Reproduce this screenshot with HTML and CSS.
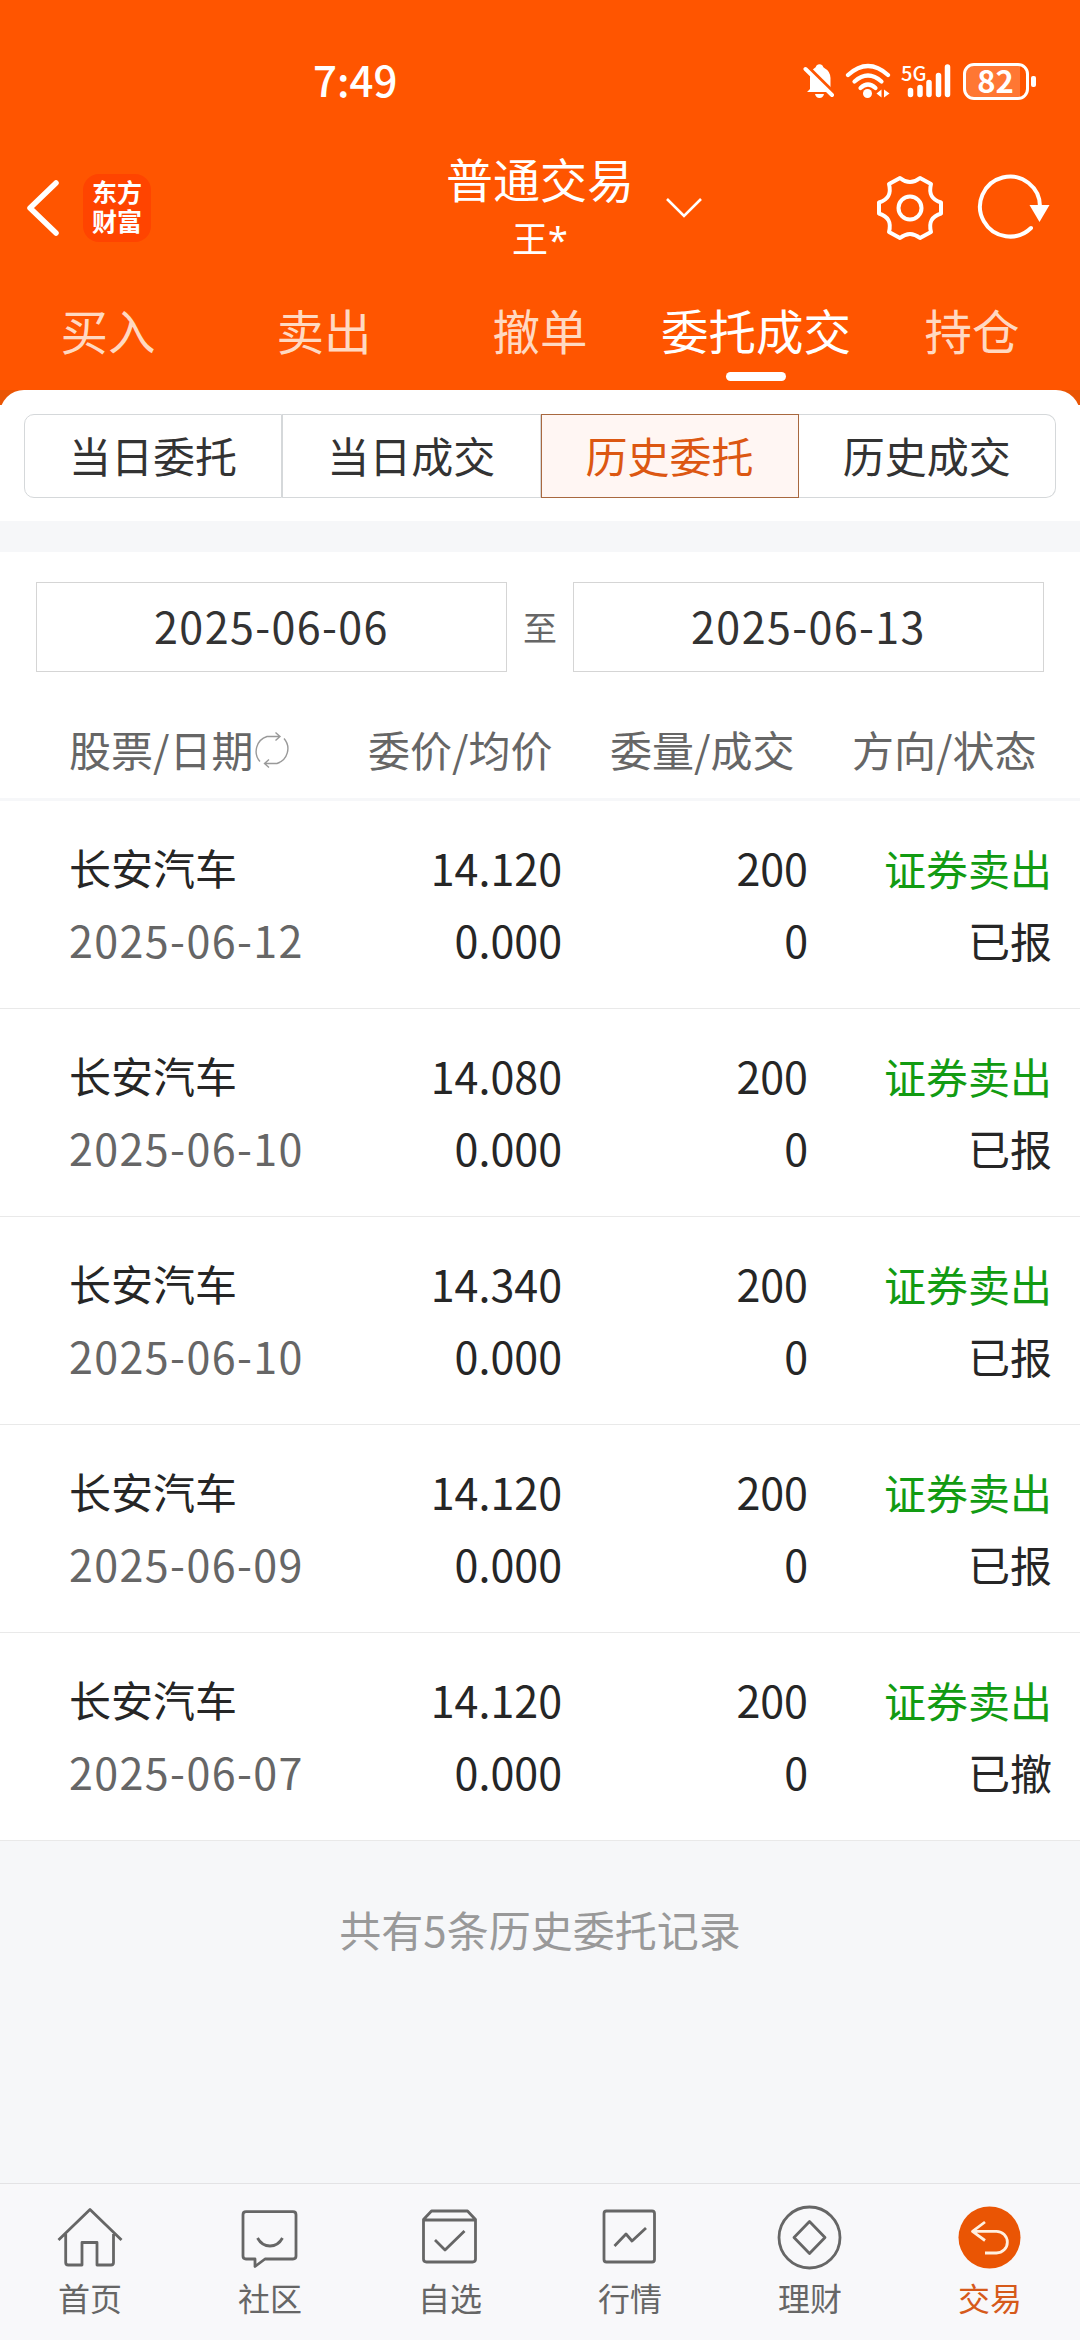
FILE: index.html
```
<!DOCTYPE html>
<html lang="zh-CN">
<head>
    <meta charset="UTF-8">
    <meta name="viewport" content="width=device-width, initial-scale=1.0">
    <title>普通交易</title>
    <link rel="stylesheet" href="styles.css">
</head>
<body>
    <div class="header">
        <!-- status bar -->
        <div class="status">
            <div class="time">7:49</div>
            <div class="status-icons">
                <svg class="bell" width="32" height="36" viewBox="0 0 32 36">
                    <path d="M7 15 Q7 8 11 5.500 Q13 4.500 13.500 2.500 Q16.500 0 19.500 2.500 Q20 4.500 22 5.500 Q27 8 27.500 15 V26 L29 29 H4 L7 26 Z" fill="#fff"/>
                    <path d="M12 31 H21 Q20 35 16.500 35 Q13 35 12 31 Z" fill="#fff"/>
                    <path d="M3.500 3 L32 31" stroke="#ff5500" stroke-width="4"/>
                    <path d="M2.500 6 L29 32" stroke="#fff" stroke-width="4" stroke-linecap="round"/>
                </svg>
                <svg class="wifi" width="46" height="36" viewBox="0 0 46 36">
                    <g fill="none" stroke="#fff" stroke-width="4.200" stroke-linecap="round">
                        <path d="M3 12 Q23 -6 43 12"/>
                        <path d="M9.500 18.500 Q23 6.500 36.500 18.500"/>
                        <path d="M15.500 25 Q23 18 30.500 25"/>
                    </g>
                    <circle cx="22.500" cy="30.500" r="4.500" fill="#fff"/>
                    <path d="M36.500 26.500 V34.500 L31.500 30.500 Z M39 26.500 V34.500 L44.500 30.500 Z" fill="#fff"/>
                </svg>
                <div class="signal">
                    <span class="net">5G</span>
                    <svg width="52" height="36" viewBox="0 0 52 36">
                        <path d="M10.500 27.500 V31.500 M20 24.500 V31.500 M29 19.500 V31.500 M38.500 12.500 V31.500 M47.500 4 V31.500" stroke="#fff" stroke-width="5.500" stroke-linecap="round"/>
                    </svg>
                </div>
                <div class="battery"><span>82</span></div>
            </div>
        </div>
        <!-- title bar -->
        <div class="navbar">
            <div class="nav-left">
                <svg width="36" height="58" viewBox="0 0 36 58">
                    <path d="M31 4 L5 29 L31 54" fill="none" stroke="#fff" stroke-width="5.500" stroke-linecap="round" stroke-linejoin="round"/>
                </svg>
                <div class="logo">东方<br>财富</div>
            </div>
            <div class="nav-title">
                <h1>普通交易</h1>
                <p>王<span>*</span></p>
            </div>
            <div class="nav-right">
                <svg class="arrow" width="40" height="24" viewBox="0 0 40 24">
                    <path d="M3 3 L20 20 L37 3" fill="none" stroke="#fff" stroke-width="2.600"/>
                </svg>
                <svg class="gear" width="72" height="72" viewBox="0 0 72 72">
                    <g fill="none" stroke="#fff" stroke-width="4" stroke-linejoin="round">
                        <path d="M26 6 Q36 14 46 6 L57 12 C55 20 56 27 67 30.500 V41.500 C56 45 55 52 57 60 L46 66 Q36 58 26 66 L15 60 C17 52 16 45 5 41.500 V30.500 C16 27 17 20 15 12 Z"/>
                        <circle cx="36" cy="36" r="11.500"/>
                    </g>
                </svg>
                <svg class="refresh" width="76" height="72" viewBox="0 0 76 72">
                    <path d="M57 56 A30 30 0 1 1 66 35" fill="none" stroke="#fff" stroke-width="4" stroke-linecap="round"/>
                    <path d="M55.500 33 H75.500 L65.500 50 Z" fill="#fff"/>
                </svg>
            </div>
        </div>
        <!-- tabs -->
        <div class="tabs">
            <div class="tab">买入</div>
            <div class="tab">卖出</div>
            <div class="tab">撤单</div>
            <div class="tab active">委托成交</div>
            <div class="tab">持仓</div>
        </div>
    </div>

    <div class="corner">
        <div class="panel">
            <div class="segment">
                <div class="seg">当日委托</div>
                <div class="seg">当日成交</div>
                <div class="seg on">历史委托</div>
                <div class="seg">历史成交</div>
            </div>
        </div>
    </div>

    <div class="dates">
        <div class="date">2025-06-06</div>
        <span>至</span>
        <div class="date">2025-06-13</div>
    </div>

    <!-- order list -->
    <div class="thead">
        <div>股票/日期<svg width="38" height="38" viewBox="0 0 38 38">
            <g fill="none" stroke="#999" stroke-width="1.400">
                <path d="M7 30.500 A15.500 15.500 0 0 1 14 5.500 H27 M22.500 1.500 L27 5.500 L22.500 9.500"/>
                <path d="M31 7.500 A15.500 15.500 0 0 1 24 32.500 H11.500 M16 28.500 L11.500 32.500 L16 36.500"/>
            </g>
        </svg></div>
        <div>委价/均价</div>
        <div>委量/成交</div>
        <div>方向/状态</div>
    </div>
    <div class="list">
        <div class="row">
            <div class="stock">长安汽车<p>2025-06-12</p></div>
            <div>14.120<p>0.000</p></div>
            <div>200<p>0</p></div>
            <div><b>证券卖出</b><p>已报</p></div>
        </div>
        <div class="row">
            <div class="stock">长安汽车<p>2025-06-10</p></div>
            <div>14.080<p>0.000</p></div>
            <div>200<p>0</p></div>
            <div><b>证券卖出</b><p>已报</p></div>
        </div>
        <div class="row">
            <div class="stock">长安汽车<p>2025-06-10</p></div>
            <div>14.340<p>0.000</p></div>
            <div>200<p>0</p></div>
            <div><b>证券卖出</b><p>已报</p></div>
        </div>
        <div class="row">
            <div class="stock">长安汽车<p>2025-06-09</p></div>
            <div>14.120<p>0.000</p></div>
            <div>200<p>0</p></div>
            <div><b>证券卖出</b><p>已报</p></div>
        </div>
        <div class="row">
            <div class="stock">长安汽车<p>2025-06-07</p></div>
            <div>14.120<p>0.000</p></div>
            <div>200<p>0</p></div>
            <div><b>证券卖出</b><p>已撤</p></div>
        </div>
    </div>
    <div class="total">共有5条历史委托记录</div>

    <!-- bottom menu -->
    <div class="menu">
        <div class="item">
            <svg width="72" height="72" viewBox="0 0 72 72">
                <path d="M4.500 39 L36 8.500 L67.500 39 M11.700 33 V61.500 Q11.700 64 14.200 64 H28 V41.500 H43 V64 H57 Q59.500 64 59.500 61.500 V33"/>
            </svg>
            首页
        </div>
        <div class="item">
            <svg width="72" height="72" viewBox="0 0 72 72">
                <path d="M12 10.700 H59 Q62 10.700 62 13.700 V55 Q62 58 59 58 H31 L21 65.500 V58 H12 Q9 58 9 55 V13.700 Q9 10.700 12 10.700 Z M23.500 37 Q28 45 36 45 Q44 45 48.500 37"/>
            </svg>
            社区
        </div>
        <div class="item">
            <svg width="72" height="72" viewBox="0 0 72 72">
                <path d="M9.500 18.500 L17.500 10 H53.500 L61.500 18.500 V58 Q61.500 61 58.500 61 H12.500 Q9.500 61 9.500 58 Z M9.500 19 H61.500 M21 39 L31 49 L50.500 30"/>
            </svg>
            自选
        </div>
        <div class="item">
            <svg width="72" height="72" viewBox="0 0 72 72">
                <rect x="10" y="10" width="50.500" height="51" rx="2.500"/>
                <path d="M20.500 45 L32 33 L38 40 L52 27"/>
            </svg>
            行情
        </div>
        <div class="item">
            <svg width="72" height="72" viewBox="0 0 72 72">
                <circle cx="35.500" cy="36.500" r="30.500"/>
                <path d="M35.500 20.500 L51 36.500 L35.500 52.500 L20 36.500 Z"/>
            </svg>
            理财
        </div>
        <div class="item current">
            <svg width="72" height="72" viewBox="0 0 72 72">
                <circle cx="35.500" cy="36.500" r="31"/>
                <path d="M31 21 L18.500 30.300 L31 39.500 M18.500 30.300 H42.500 A10.800 10.800 0 0 1 42.500 52 H31"/>
            </svg>
            交易
        </div>
    </div>
</body>
</html>
```

FILE: styles.css
```
*{
    box-sizing: border-box;
}
body{
    margin: 0;
    width: 1080px;
    height: 2340px;
    display: flex;
    flex-direction: column;
    background: #f6f7f9;
    color: #262626;
    font-family: "Noto Sans CJK SC", sans-serif;
    font-size: 42px;
}
h1, p{
    margin: 0;
    font-weight: normal;
}
svg{
    display: block;
}
/* header */
.header{
    height: 390px;
    background: #ff5500;
    color: #fff;
}
.status{
    height: 140px;
    padding: 22px 44px 0 313px;
    display: flex;
    justify-content: space-between;
    align-items: center;
}
.time{
    padding-bottom: 5px;
    font-size: 42px;
    font-weight: 500;
    line-height: 60px;
}
.status-icons{
    display: flex;
    align-items: center;
}
.wifi{
    margin-left: 10px;
}
.signal{
    position: relative;
    margin: 0 11px 0 9px;
}
.net{
    position: absolute;
    left: 1px;
    top: -2px;
    font-family: "Noto Sans CJK SC", sans-serif;
    font-size: 20px;
    font-weight: 500;
    line-height: 24px;
}
.battery{
    position: relative;
    width: 66px;
    height: 37px;
    margin-right: 7px;
    border: 3px solid #fff;
    border-radius: 11px;
    background: linear-gradient(to right, rgba(255,255,255,0.2) 54px, transparent 54px);
    text-align: center;
}
.battery span{
    display: block;
    padding-right: 1px;
    font-size: 31px;
    font-weight: 700;
    line-height: 28px;
}
.battery::after{
    content: "";
    position: absolute;
    right: -10px;
    top: 10px;
    width: 5px;
    height: 11px;
    border-radius: 2px;
    background: #fff;
}
.navbar{
    height: 136px;
    display: grid;
    grid-template-columns: 420px 240px 420px;
    align-items: center;
}
.nav-left{
    display: flex;
    align-items: center;
    padding-left: 25px;
}
.logo{
    width: 68px;
    height: 68px;
    margin-left: 22px;
    padding-top: 3px;
    border-radius: 16px;
    background: #ff4400;
    font-size: 25px;
    font-weight: 700;
    line-height: 29px;
    text-align: center;
}
.nav-title{
    text-align: center;
}
.nav-title h1{
    font-size: 47px;
    line-height: 60px;
}
.nav-title p{
    font-size: 36px;
    line-height: 58px;
}
.nav-title span{
    font-family: "Noto Sans", sans-serif;
}
.nav-right{
    display: flex;
    align-items: center;
    padding-left: 4px;
}
.gear{
    margin-left: 170px;
}
.refresh{
    margin-left: 28px;
}
.tabs{
    height: 114px;
    display: flex;
}
.tab{
    width: 216px;
    line-height: 108px;
    font-size: 47.5px;
    text-align: center;
    color: #ffd9c2;
}
.tab.active{
    position: relative;
    color: #fff;
}
.tab.active::after{
    content: "";
    position: absolute;
    left: 78px;
    bottom: 9px;
    width: 60px;
    height: 9px;
    border-radius: 4.5px;
    background: #fff;
}
/* segment */
.corner{
    background: linear-gradient(#ea5504 15px, #fff 15px);
}
.panel{
    height: 131px;
    padding: 24px;
    border-radius: 24px 24px 0 0;
    background: #fff;
}
.segment{
    display: flex;
    color: #333;
}
.seg{
    flex: 1;
    height: 84px;
    border: 1px solid #d5d8da;
    line-height: 79px;
    text-align: center;
}
.seg:first-child{
    border-radius: 10px 0 0 10px;
}
.seg:last-child{
    border-left: 0;
    border-radius: 0 10px 10px 0;
}
.seg.on{
    border-color: #a8683f;
    background: #fff6f3;
    color: #dc5712;
}
/* dates */
.dates{
    height: 150px;
    margin-top: 31px;
    padding: 30px 36px;
    display: flex;
    background: #fff;
}
.date{
    width: 471px;
    height: 90px;
    border: 1px solid #d5d5d5;
    line-height: 84px;
    font-size: 43px;
    letter-spacing: 1.4px;
    text-align: center;
    color: #333;
}
.dates span{
    width: 66px;
    line-height: 90px;
    font-size: 34px;
    text-align: center;
    color: #666;
}
/* order list */
.thead{
    height: 99px;
    padding: 0 44px 3px 69px;
    display: grid;
    grid-template-columns: 299px 242px 242px 184px;
    border-bottom: 3px solid #f6f7f9;
    background: #fff;
    line-height: 93px;
    color: #666;
}
.thead div{
    display: flex;
    align-items: center;
    white-space: nowrap;
}
.thead svg{
    margin-top: 3px;
}
.row{
    height: 208px;
    padding: 30px 28px 0 69px;
    display: grid;
    grid-template-columns: 249px 244px 246px 244px;
    border-bottom: 1px solid #e9e9e9;
    background: #fff;
    font-size: 43px;
    line-height: 72px;
    text-align: right;
    white-space: nowrap;
}
.row b{
    font-size: 42px;
    font-weight: normal;
    color: #129b12;
}
.row div:last-child p{
    font-size: 42px;
}
.row .stock{
    text-align: left;
    font-size: 42px;
}
.stock p{
    font-size: 43px;
    letter-spacing: 1.4px;
    color: #666;
}
.total{
    flex: 1;
    line-height: 175px;
    text-align: center;
    color: #999;
}
/* bottom menu */
.menu{
    height: 157px;
    display: flex;
    border-top: 1px solid #e3e3e5;
    background: #f8f8fa;
    color: #666;
}
.item{
    width: 180px;
    padding-top: 17px;
    font-size: 32px;
    line-height: 49px;
    text-align: center;
}
.item svg{
    margin: 0 auto;
    fill: none;
    stroke: #666;
    stroke-width: 2.8;
    stroke-linejoin: round;
}
.current{
    color: #d65a1b;
}
.current svg circle{
    fill: #ea5504;
    stroke: none;
}
.current svg path{
    stroke: #fff0e0;
}
```
